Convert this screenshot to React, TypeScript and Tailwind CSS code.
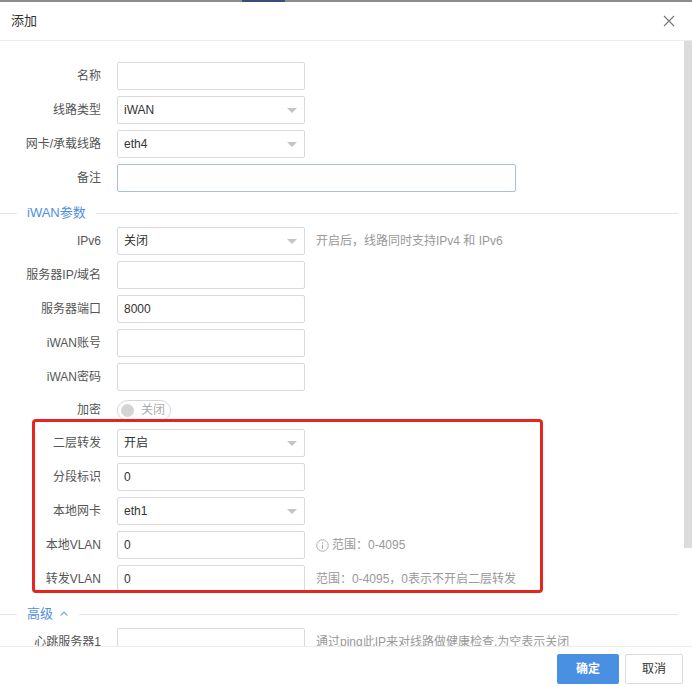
import { ReactNode } from "react";

const font = {
  fontFamily: '"Liberation Sans", "Noto Sans CJK SC", sans-serif',
};

const Arrow = () => (
  <span className="ml-auto mr-[7px] w-0 h-0 border-l-[5px] border-r-[5px] border-t-[5px] border-l-transparent border-r-transparent border-t-[#c4c4c4]" />
);

const Field = ({
  value,
  select,
  wide,
  focus,
}: {
  value?: string;
  select?: boolean;
  wide?: boolean;
  focus?: boolean;
}) => (
  <div
    className={`flex items-center h-[28px] pl-[6px] rounded-[2px] border bg-white text-[12px] text-[#333] ${
      wide ? "w-[399px]" : "w-[188px]"
    } ${focus ? "border-[#a9bfdf]" : "border-[#d9d9d9]"}`}
  >
    <span>{value}</span>
    {select && <Arrow />}
  </div>
);

const Row = ({
  label,
  children,
  hint,
}: {
  label: string;
  children: ReactNode;
  hint?: ReactNode;
}) => (
  <div className="flex items-center h-[28px]">
    <div className="w-[101px] text-right text-[12px] text-[#555] whitespace-nowrap">
      {label}
    </div>
    <div className="ml-[16px]">{children}</div>
    {hint && (
      <div className="ml-[11px] flex items-center text-[12px] text-[#999] whitespace-nowrap">
        {hint}
      </div>
    )}
  </div>
);

const Section = ({ title, chevron }: { title: string; chevron?: boolean }) => (
  <div className="flex items-center h-[16px] mt-[7px]">
    <div className="w-[17px] h-px bg-[#dfe5ee]" />
    <div className="ml-[10px] flex items-center text-[13px] text-[#4f8fdc] whitespace-nowrap">
      {title}
      {chevron && (
        <svg width="10" height="10" viewBox="0 0 10 10" className="ml-[6px]">
          <path d="M1.5 6.5 L5 3 L8.5 6.5" fill="none" stroke="#7aa9e3" strokeWidth="1.1" />
        </svg>
      )}
    </div>
    <div className="ml-[10px] mr-[6px] flex-1 h-px bg-[#dfe5ee]" />
  </div>
);

const InfoIcon = () => (
  <svg width="13" height="13" viewBox="0 0 14 14" className="mr-[3px]">
    <circle cx="7" cy="7" r="6.2" fill="none" stroke="#aaa" strokeWidth="1" />
    <circle cx="7" cy="4.2" r="0.8" fill="#aaa" />
    <path d="M7 6 V10.5" stroke="#aaa" strokeWidth="1.2" />
  </svg>
);

export default function App() {
  return (
    <div className="w-[692px] h-[687px] bg-white flex flex-col overflow-hidden" style={font}>
      <div className="h-[2px] bg-[#8c8c8c] flex shrink-0">
        <div className="ml-[242px] w-[43px] bg-[#3d4b78]" />
      </div>
      <div className="h-[39px] flex items-center justify-between px-[11px] border-b border-[#ececec] shrink-0">
        <span className="text-[13px] text-[#333]">添加</span>
        <svg width="12" height="12" viewBox="0 0 12 12" className="mr-[6px]">
          <path d="M1 1 L11 11 M11 1 L1 11" stroke="#777" strokeWidth="1.1" />
        </svg>
      </div>
      <div className="h-[605px] flex shrink-0 overflow-hidden">
        <div className="relative flex-1 overflow-hidden">
          <div className="flex flex-col gap-[6px] pt-[21px]">
            <Row label="名称">
              <Field />
            </Row>
            <Row label="线路类型">
              <Field value="iWAN" select />
            </Row>
            <Row label="网卡/承载线路">
              <Field value="eth4" select />
            </Row>
            <Row label="备注">
              <Field wide focus />
            </Row>
            <Section title="iWAN参数" />
            <Row label="IPv6" hint="开启后，线路同时支持IPv4 和 IPv6">
              <Field value="关闭" select />
            </Row>
            <Row label="服务器IP/域名">
              <Field />
            </Row>
            <Row label="服务器端口">
              <Field value="8000" />
            </Row>
            <Row label="iWAN账号">
              <Field />
            </Row>
            <Row label="iWAN密码">
              <Field />
            </Row>
            <div className="flex items-center h-[26px]">
              <div className="w-[101px] text-right text-[12px] text-[#555]">加密</div>
              <div className="ml-[16px] flex items-center h-[21px] w-[54px] rounded-full border border-[#d6d6d6] px-[3px]">
                <span className="w-[13px] h-[13px] rounded-full bg-[#d4d4d4]" />
                <span className="ml-[7px] text-[12px] text-[#aaa]">关闭</span>
              </div>
            </div>
            <Row label="二层转发">
              <Field value="开启" select />
            </Row>
            <Row label="分段标识">
              <Field value="0" />
            </Row>
            <Row label="本地网卡">
              <Field value="eth1" select />
            </Row>
            <Row
              label="本地VLAN"
              hint={
                <>
                  <InfoIcon />
                  范围：0-4095
                </>
              }
            >
              <Field value="0" />
            </Row>
            <Row label="转发VLAN" hint="范围：0-4095，0表示不开启二层转发">
              <Field value="0" />
            </Row>
            <Section title="高级" chevron />
            <Row label="心跳服务器1" hint="通过ping此IP来对线路做健康检查,为空表示关闭">
              <Field />
            </Row>
          </div>
          <div className="absolute left-[32px] top-[378px] w-[511px] h-[174px] border-[3px] border-[#e8251d] rounded-[4px]" />
        </div>
        <div className="w-[8px] h-[507px] bg-[#dcdcdc]" />
      </div>
      <div className="flex-1 border-t border-[#ececec] flex items-start justify-end pt-[7px] pr-[9px] gap-[6px]">
        <button className="w-[62px] h-[30px] rounded-[2px] bg-[#4a90e2] text-white text-[12px] font-bold">
          确定
        </button>
        <button className="w-[58px] h-[30px] rounded-[2px] bg-white border border-[#dcdcdc] text-[#333] text-[12px]">
          取消
        </button>
      </div>
    </div>
  );
}
